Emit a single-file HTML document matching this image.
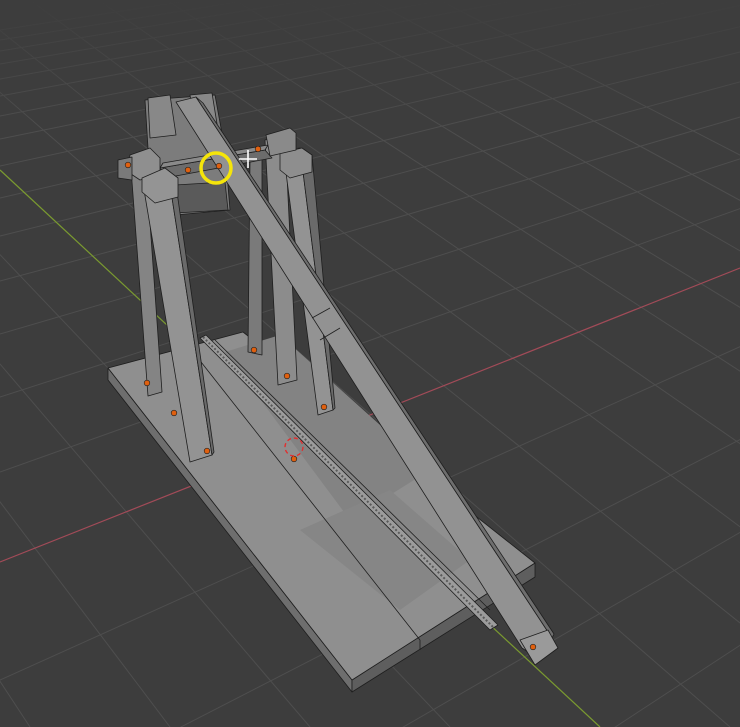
<!DOCTYPE html>
<html style="margin:0;padding:0;width:740px;height:727px;overflow:hidden"><head><meta charset="utf-8"><style>body{margin:0;padding:0;width:740px;height:727px;background:#3d3d3d;overflow:hidden}svg{display:block;overflow:hidden}</style></head>
<body>
<svg width="740" height="727" viewBox="0 0 740 727" xmlns="http://www.w3.org/2000/svg">
<defs><linearGradient id="fade" x1="0" y1="0" x2="0" y2="1"><stop offset="0" stop-color="#3d3d3d" stop-opacity="1"/><stop offset="0.35" stop-color="#3d3d3d" stop-opacity="0.6"/><stop offset="1" stop-color="#3d3d3d" stop-opacity="0"/></linearGradient>
<clipPath id="c"><rect width="740" height="727"/></clipPath></defs>
<rect width="740" height="727" fill="#3d3d3d"/>
<g clip-path="url(#c)">
<g stroke="#4e4e4e" stroke-width="1" fill="none">
<line x1="2200" y1="-311" x2="0" y2="820"/>
<line x1="2200" y1="-311" x2="0" y2="680"/>
<line x1="2200" y1="-311" x2="0" y2="472"/>
<line x1="2200" y1="-311" x2="0" y2="397"/>
<line x1="2200" y1="-311" x2="0" y2="334"/>
<line x1="2200" y1="-311" x2="0" y2="281"/>
<line x1="2200" y1="-311" x2="0" y2="236"/>
<line x1="2200" y1="-311" x2="0" y2="198"/>
<line x1="2200" y1="-311" x2="0" y2="166"/>
<line x1="2200" y1="-311" x2="0" y2="139"/>
<line x1="2200" y1="-311" x2="0" y2="116"/>
<line x1="2200" y1="-311" x2="0" y2="96"/>
<line x1="2200" y1="-311" x2="0" y2="79"/>
<line x1="2200" y1="-311" x2="0" y2="64"/>
<line x1="2200" y1="-311" x2="0" y2="51"/>
<line x1="2200" y1="-311" x2="0" y2="40"/>
<line x1="2200" y1="-311" x2="0" y2="30"/>
<line x1="2200" y1="-311" x2="0" y2="960"/>
<line x1="2200" y1="-311" x2="0" y2="1130"/>
<line x1="-900" y1="-690" x2="-670" y2="727"/>
<line x1="-900" y1="-690" x2="-530" y2="727"/>
<line x1="-900" y1="-690" x2="-390" y2="727"/>
<line x1="-900" y1="-690" x2="-250" y2="727"/>
<line x1="-900" y1="-690" x2="-110" y2="727"/>
<line x1="-900" y1="-690" x2="30" y2="727"/>
<line x1="-900" y1="-690" x2="170" y2="727"/>
<line x1="-900" y1="-690" x2="310" y2="727"/>
<line x1="-900" y1="-690" x2="450" y2="727"/>
<line x1="-900" y1="-690" x2="730" y2="727"/>
<line x1="-900" y1="-690" x2="870" y2="727"/>
<line x1="-900" y1="-690" x2="1010" y2="727"/>
<line x1="-900" y1="-690" x2="1150" y2="727"/>
<line x1="-900" y1="-690" x2="1290" y2="727"/>
<line x1="-900" y1="-690" x2="1430" y2="727"/>
<line x1="-900" y1="-690" x2="1570" y2="727"/>
<line x1="-900" y1="-690" x2="1710" y2="727"/>
<line x1="-900" y1="-690" x2="1850" y2="727"/>
</g>
<rect x="0" y="0" width="740" height="130" fill="url(#fade)"/>
<line x1="0" y1="562" x2="740" y2="268" stroke="#a24b58" stroke-width="1.2"/>
<line x1="0" y1="170" x2="600" y2="727" stroke="#7a9a30" stroke-width="1.2"/>
</g>

<g stroke="#1e1e1e" stroke-width="0.8" stroke-linejoin="round">
<polygon points="108,368 108,380 352,692 352,680" fill="#6e6e6e"/>
<polygon points="352,680 352,692 535,577 535,563" fill="#5e5e5e"/>
<polygon points="108,368 243,332 535,563 352,680" fill="#8f8f8f"/>
<polygon points="225,352 280,335 430,470 350,520" fill="#838383" stroke="none"/>
<polygon points="300,530 390,490 470,560 400,610" fill="#868686" stroke="none"/>
<line x1="190" y1="348" x2="420" y2="640"/>
<line x1="215" y1="340" x2="490" y2="610"/>
<line x1="420" y1="640" x2="420" y2="650"/>
<polygon points="200,338 206,335 498,625 490,630" fill="#9c9c9c"/>
<line x1="203" y1="337" x2="494" y2="628" stroke="#5a5a5a" stroke-width="2" stroke-dasharray="2 2"/>
<polygon points="250,160 262,158 262,355 248,352" fill="#7a7a7a"/>
<polygon points="265,140 285,135 297,380 278,385" fill="#8c8c8c"/>
<polygon points="283,150 300,148 333,410 318,415" fill="#939393"/>
<polygon points="300,148 312,155 335,408 333,410" fill="#6a6a6a"/>
<polygon points="145,100 215,95 225,150 230,210 175,215 150,180" fill="#7c7c7c"/>
<polygon points="175,185 225,182 228,210 175,213" fill="#5a5a5a"/>
<polygon points="148,98 170,95 176,135 150,138" fill="#888"/>
<polygon points="190,95 212,93 218,130 196,132" fill="#888"/>
<polygon points="160,168 265,150 272,158 165,178" fill="#6c6c6c"/>
<polygon points="160,168 265,150 268,145 163,163" fill="#8a8a8a"/>
<polygon points="280,153 302,148 312,155 312,172 290,178 280,170" fill="#8e8e8e"/>
<polygon points="266,135 290,128 296,133 296,150 270,156" fill="#8a8a8a"/>
<polygon points="130,155 145,152 162,392 148,396" fill="#848484"/>
<polygon points="142,178 168,172 212,455 190,462" fill="#939393"/>
<polygon points="168,172 175,178 214,452 212,455" fill="#6a6a6a"/>
<polygon points="130,155 150,148 160,158 160,175 140,180 128,172" fill="#8f8f8f"/>
<polygon points="142,178 165,168 178,178 178,197 155,203 142,192" fill="#949494"/>
<polygon points="118,160 132,157 132,180 118,178" fill="#7a7a7a"/>
<polygon points="176,102 196,97 552,638 540,660 522,648" fill="#929292"/>
<polygon points="196,97 203,103 554,634 552,638" fill="#6e6e6e"/>
<polygon points="520,640 548,630 558,648 535,665" fill="#9a9a9a"/>
<line x1="312" y1="318" x2="330" y2="308"/>
<line x1="320" y1="340" x2="340" y2="328"/>
</g>
<g fill="#e0600f" stroke="#1e1e1e" stroke-width="0.6">
<circle cx="128" cy="165" r="2.8"/><circle cx="188" cy="170" r="2.8"/><circle cx="219" cy="166" r="2.8"/>
<circle cx="258" cy="149" r="2.8"/><circle cx="147" cy="383" r="2.8"/><circle cx="174" cy="413" r="2.8"/>
<circle cx="207" cy="451" r="2.8"/><circle cx="254" cy="350" r="2.8"/><circle cx="287" cy="376" r="2.8"/>
<circle cx="324" cy="407" r="2.8"/><circle cx="294" cy="459" r="2.8"/><circle cx="533" cy="647" r="2.8"/>
</g>
<circle cx="216" cy="168" r="15" fill="none" stroke="#f5e50a" stroke-width="3.5"/>
<g stroke="#ffffff" stroke-width="1.6"><line x1="239" y1="159" x2="257" y2="159"/><line x1="248" y1="150" x2="248" y2="168"/></g>
<circle cx="294" cy="447" r="9" fill="none" stroke="#e03030" stroke-width="1.4" stroke-dasharray="4 3"/>
</svg>
</body></html>
